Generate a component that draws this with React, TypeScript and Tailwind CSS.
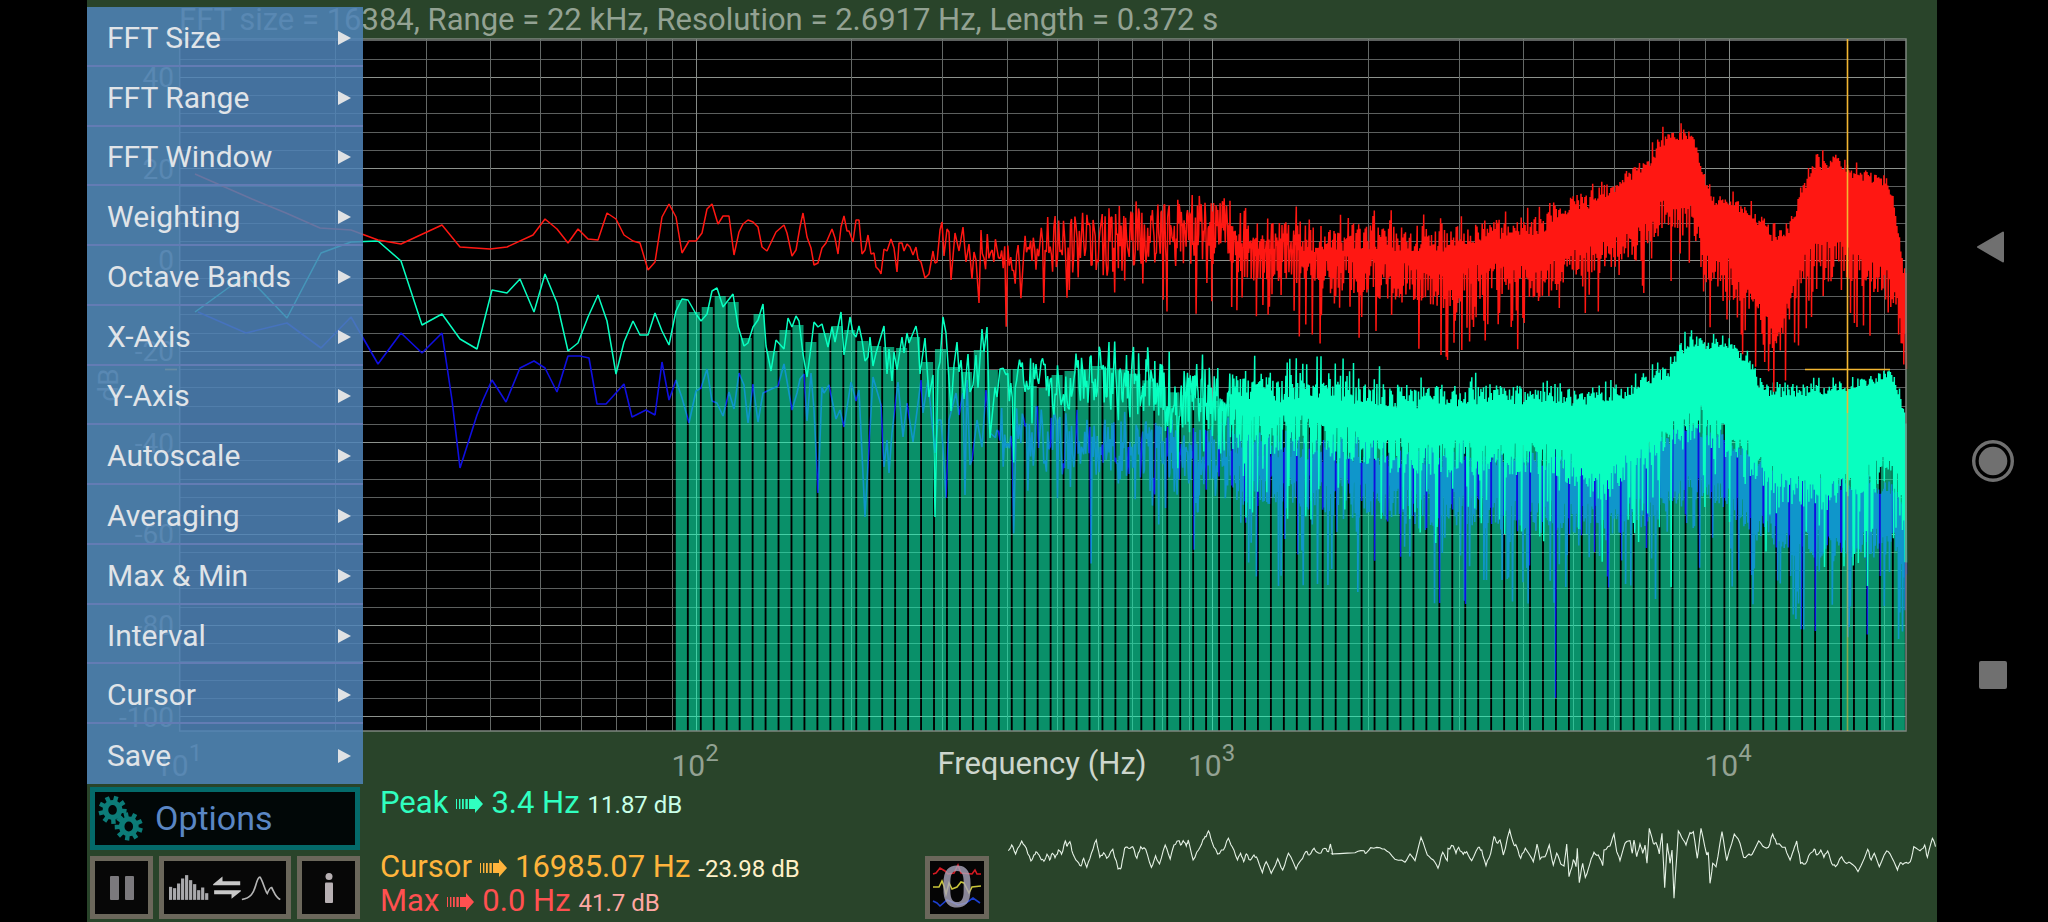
import React from "react";

/* ---------- chart geometry ---------- */

const LEFT = 179.7;
const RIGHT = 1906;
const TOP = 39;
const BOTTOM = 731;
const DECADE = 516.5;
const BIN_HZ = 2.6917;
const BAR_PITCH = 12.957;

const xOf = (hz: number) => LEFT + DECADE * (Math.log10(hz) - 1);
const yOf = (db: number) => 260 - db * 4.568;

type Key = [x: number, top: number, bottom: number];

function makeRandom(seed: number) {
  let s = seed;
  return () => {
    s = (s + 0x6d2b79f5) | 0;
    let t = Math.imul(s ^ (s >>> 15), 1 | s);
    t = (t + Math.imul(t ^ (t >>> 7), 61 | t)) ^ t;
    return ((t ^ (t >>> 14)) >>> 0) / 4294967296;
  };
}

function envelope(keys: Key[], x: number): [number, number] {
  let i = 0;
  while (i < keys.length - 2 && keys[i + 1][0] < x) i++;
  const a = keys[i];
  const b = keys[i + 1];
  const t = Math.min(1, Math.max(0, (x - a[0]) / (b[0] - a[0])));
  return [a[1] + (b[1] - a[1]) * t, a[2] + (b[2] - a[2]) * t];
}

/* Low bins are measured values; the dense part is noise inside an envelope. */
function spectrum(head: string, keys: Key[], seed: number, dip: number, extra: Key[] = []) {
  const rnd = makeRandom(seed);
  const out: string[] = [head];
  const start = keys[0][0];
  const dense = 1230;
  let bin = Math.ceil(Math.pow(10, (start - LEFT) / DECADE + 1) / BIN_HZ);
  for (; xOf(bin * BIN_HZ) < dense; bin++) {
    const x = xOf(bin * BIN_HZ);
    const [t, b] = envelope(keys, x);
    let y = t - 2 + (b - t) * rnd();
    const r = rnd();
    if (r < 0.08) y = b + rnd() * rnd() * dip;
    else if (r > 0.95) y = t - rnd() * 14;
    out.push(`${x.toFixed(1)},${y.toFixed(1)}`);
  }
  for (let x = dense; x <= RIGHT; x += 1.3) {
    const [t, b] = envelope(keys, x);
    const loose = Math.max(0, Math.min(1, (1640 - x) / 300));
    let hi = t - 4 + (13 + 17 * loose) * rnd();
    if (rnd() < 0.1) hi = t - 4 - (8 + 8 * loose) * rnd();
    let lo = b - 20 - 8 * loose + (32 + 8 * loose) * rnd();
    if (rnd() < 0.27) lo = b + Math.pow(rnd(), 1.5) * dip;
    for (const e of extra) if (Math.abs(e[0] - x) < 0.7) lo = e[2];
    out.push(`${x.toFixed(1)},${hi.toFixed(1)} ${(x + 0.4).toFixed(1)},${lo.toFixed(1)}`);
  }
  return out.join(" ");
}

const redHead =
  "195,174 252,199 286,213 320,228 351,230 378,240 401,244 442,225 460,247 490,249 507,247 533,235 545,219 557,229 568,243 578,229 588,239 598,240 607,213 616,219 624,235 633,241 640,243 648,270 655,262 662,217 669,204 676,217 682,253 689,241 696,241 702,233 707,209 712,204 718,224 723,216 729,216 734,255 739,232 743,224 748,220 753,222 758,227 762,247 767,251 776,232 784,225 787,233 792,256 796,250 800,227 803,213 807,237 811,248 814,265 818,263 822,248 826,243 832,229 835,238 838,254 841,227 844,216 847,231 849,231 853,242 856,220 859,220 862,254 865,250 868,235 871,254 874,253 876,267 879,270 881,274 884,249 887,251 891,239 894,248 897,272 899,243 902,243 904,251 907,244 910,247 913,255 916,247 918,259 921,262 925,278 929,274 933,251 935,263 937,262 940,230 942,222 944,256 947,229 949,232 951,280 955,233 959,251 963,227 966,262 969,244 972,279 974,252 976,260 979,303 981,230";

const redKeys: Key[] = [
  [982, 232, 278], [1030, 236, 280], [1060, 218, 272], [1100, 216, 280], [1130, 208, 275],
  [1160, 206, 258], [1200, 205, 265], [1225, 204, 262], [1235, 222, 268], [1290, 224, 270],
  [1330, 228, 282], [1370, 226, 286], [1410, 230, 290], [1440, 232, 300], [1470, 226, 288],
  [1500, 222, 286], [1540, 220, 288], [1560, 210, 280], [1573, 196, 268], [1590, 198, 266],
  [1600, 190, 262], [1613, 185, 258], [1630, 174, 252], [1640, 166, 246], [1650, 157, 234],
  [1660, 142, 220], [1668, 133, 214], [1690, 132, 222], [1697, 145, 236], [1700, 164, 258],
  [1708, 182, 270], [1715, 204, 278], [1722, 195, 268], [1735, 201, 288], [1750, 210, 300],
  [1763, 220, 316], [1772, 233, 340], [1780, 233, 336], [1787, 229, 320], [1795, 210, 290],
  [1800, 194, 278], [1807, 181, 268], [1812, 163, 262], [1830, 161, 256], [1838, 156, 258],
  [1850, 169, 270], [1860, 173, 276], [1880, 177, 284], [1888, 181, 290], [1895, 206, 308],
  [1900, 240, 332], [1903, 264, 345], [1906, 268, 355],
];

const cyanHead =
  "195,312 246,275 287,318 321,253 351,242 378,241 401,261 422,325 442,314 460,339 477,349 492,290 507,293 520,279 534,312 545,274 557,303 568,351 578,343 588,317 598,295 607,321 616,374 624,342 633,321 640,335 648,335 655,313 662,331 669,345 676,311 682,299 688,300 696,314 701,321 707,314 712,291 717,288 723,307 733,294 738,326 744,346 748,343 753,327 758,320 763,304 766,346 771,371 776,340 784,349 788,318 792,327 796,316 799,321 803,354 807,377 811,347 814,322 818,327 822,324 828,347 832,327 835,342 841,312 844,355 850,317 853,333 856,337 859,326 862,340 865,361 868,357 870,337 873,366 876,353 884,326 887,374 889,349 892,381 894,352 897,370 902,337 904,353 907,333 909,343 916,326 918,338 920,374 925,338 929,397 933,375 935,517 938,370 940,362 943,317 946,333 951,411 954,365 957,342 959,372 961,360 964,399 968,354 970,392 973,385 976,355 978,388 982,329 984,352 987,327 990,438 995,387 997,397 1000,369";

const cyanKeys: Key[] = [
  [1002, 362, 402], [1045, 354, 396], [1060, 378, 422], [1090, 352, 404], [1130, 352, 410],
  [1170, 366, 430], [1200, 368, 430], [1230, 370, 436], [1280, 378, 444], [1300, 376, 440],
  [1340, 376, 450], [1390, 386, 462], [1430, 388, 466], [1500, 388, 462], [1560, 390, 466],
  [1580, 397, 482], [1600, 393, 492], [1625, 389, 468], [1650, 376, 460], [1670, 368, 440],
  [1678, 349, 438], [1690, 340, 430], [1700, 337, 422], [1706, 349, 430], [1712, 337, 438],
  [1730, 340, 446], [1745, 355, 458], [1755, 367, 468], [1760, 386, 476], [1790, 389, 496],
  [1830, 386, 492], [1845, 385, 490], [1870, 378, 478], [1885, 370, 476], [1895, 377, 484],
  [1900, 392, 504], [1903, 410, 516], [1906, 418, 530],
];

const blueHead =
  "198,312 246,333 287,323 321,348 351,317 378,364 401,333 422,353 442,333 452,400 460,468 477,415 483,400 492,380 506,402 520,368 534,361 545,368 557,392 568,356 580,356 589,358 597,404 606,404 624,384 632,417 646,410 655,415 662,362 669,400 676,380 682,398 689,423 696,391 701,388 707,369 712,401 717,403 723,416 729,392 734,409 739,373 744,385 748,423 753,384 758,422 763,393 778,386 784,364 792,410 797,393 800,379 804,374 807,421 811,373 814,410 818,493 822,387 824,393 829,385 836,419 840,410 844,427 851,382 856,401 859,390 865,517 869,447 873,377 881,405 884,467 887,440 889,473 892,433 898,382 903,437 907,403 913,442 921,380 923,413 928,380 935,453 938,420 941,420 944,463 946,498 949,420 956,393 959,415 963,393 965,495 967,380 970,465 972,460 977,420 982,447 986,390 990,433";

const blueKeys: Key[] = [
  [994, 408, 458], [1050, 412, 468], [1100, 420, 480], [1200, 426, 488], [1300, 434, 500],
  [1400, 445, 512], [1500, 450, 518], [1600, 460, 526], [1650, 445, 516], [1690, 425, 490],
  [1730, 440, 502], [1760, 460, 532], [1800, 475, 546], [1850, 485, 548], [1895, 485, 546],
  [1903, 510, 570], [1906, 520, 585],
];

const redLine = spectrum(redHead, redKeys, 11, 66);
const cyanLine = spectrum(cyanHead, cyanKeys, 29, 80, [[1671, 0, 587], [1867, 0, 586]]);
const blueLine = spectrum(blueHead, blueKeys, 47, 90, [[1555, 0, 698], [1815, 0, 631]]);

const barTops = [
  300, 312, 307, 296, 302, 338, 314, 351, 330, 325, 342, 333, 326, 330, 341, 346, 347, 348, 337,
  362, 349, 367, 372, 350, 370, 369, 369, 386, 388, 375, 371,
];
const bars = Array.from({ length: 95 }, (_, i) => {
  const x = 675.8 + i * BAR_PITCH;
  const top = barTops[i] ?? envelope(cyanKeys, x + 6)[0] + Math.min(34, 10 + (i - 30) * 2);
  return { x, top, width: Math.min(11.1, RIGHT - x) };
});

const verticals: { x: number; major: boolean }[] = [];
for (let d = 1; d <= 4; d++)
  for (let m = 1; m <= 9; m++) {
    const hz = m * Math.pow(10, d);
    if (hz > 10 && hz < 22000) verticals.push({ x: xOf(hz), major: m === 1 });
  }
const horizontals: { y: number; major: boolean }[] = [];
for (let db = -100; db <= 48; db += 4) horizontals.push({ y: yOf(db), major: db % 20 === 0 });

/* ---------- waveform ---------- */

const waveNoise = makeRandom(5);

function trace(ox: number, oy: number, sx: number, sy: number, data: number[]) {
  const out: string[] = [];
  for (let i = 0; i < data.length; i += 2) {
    const x = ox + data[i] / sx;
    const y = oy + data[i + 1] / sy;
    out.push(`${x.toFixed(1)},${y.toFixed(1)}`);
    if (i + 2 < data.length) {
      const nx = ox + data[i + 2] / sx;
      const ny = oy + data[i + 3] / sy;
      const rough = nx - x > 12 ? 0.5 : 3;
      for (const t of [0.33, 0.66])
        out.push(`${(x + (nx - x) * t).toFixed(1)},${(y + (ny - y) * t + (waveNoise() - 0.5) * rough).toFixed(1)}`);
    }
  }
  return out.join(" ");
}

const wave = [
  trace(900, 720, 2.613, 3, [
    283, 392, 292, 375, 302, 402, 318, 363, 330, 385, 342, 423, 350, 405, 358, 397, 366, 412, 376,
    424, 384, 403, 391, 420, 398, 400, 405, 413, 414, 390, 422, 403, 432, 363, 437, 378, 444, 365,
    452, 402, 464, 425, 473, 438, 480, 415, 488, 442, 500, 400, 513, 360, 522, 412, 532, 398, 540,
    415, 556, 388, 570, 447, 578, 443, 587, 385, 597, 385, 608, 380, 619, 415, 629, 380, 642, 388,
    657, 442, 668, 407, 678, 432, 693, 375, 706, 417, 716, 375, 728, 362, 733, 375, 740, 362, 748,
    378, 753, 360, 766, 420, 780, 390, 792, 358, 800, 350, 806, 333, 815, 365, 830, 402, 845, 390,
    858, 355, 868, 380, 882, 420, 890, 400, 898, 425, 905, 402, 915, 420, 925, 405, 935, 420, 947,
    458, 957, 425, 970, 460, 987, 416, 1000, 450, 1015, 400, 1035, 448, 1048, 420, 1060, 395, 1070,
    405, 1082, 385, 1095, 400, 1110, 385, 1120, 395, 1125, 372, 1130, 403,
  ]),
  trace(1240, 820, 3, 3, [
    276, 102, 345, 98, 372, 92, 378, 100, 392, 83, 420, 83, 440, 93, 465, 118, 495, 127, 510, 102,
    525, 122, 543, 52, 562, 105, 580, 120, 594, 145, 608, 97, 622, 122, 624, 85, 640, 78, 648, 100,
    656, 82, 670, 103, 680, 95, 695, 122, 715, 82, 725, 90, 738, 137, 752, 100, 762, 50, 770, 68,
    780, 60, 790, 105, 809, 30, 822, 75, 830, 80, 842, 115, 856, 85, 865, 98, 880, 125, 891, 72,
    900, 118, 915, 110, 928, 75, 940, 135, 950, 100, 962, 132, 972, 138, 980, 72, 987, 170, 1000,
    120, 1008, 140, 1012, 85, 1018, 188, 1028, 130, 1036, 172, 1050, 130, 1062, 97, 1075, 105,
    1088, 137, 1092, 90, 1110, 78, 1122, 42, 1130, 95, 1140, 122, 1155, 70, 1170, 62, 1177, 100,
    1182, 60, 1190, 110, 1200, 72, 1208, 100, 1215, 75, 1221, 130, 1228, 25, 1240, 70, 1248, 68,
    1258, 102, 1266, 40, 1274, 203, 1282, 70, 1290, 130, 1296, 90, 1302, 235, 1315, 33, 1330, 60,
    1338, 75, 1350, 38, 1360, 35, 1372, 115, 1383, 25, 1400, 105, 1405, 100, 1410, 190, 1418, 130,
    1428, 140, 1446, 35, 1460, 122, 1483, 42, 1500, 70,
  ]),
  trace(1440, 720, 2.579, 3, [
    783, 412, 797, 402, 805, 403, 822, 363, 832, 378, 847, 382, 858, 342, 868, 372, 890, 382, 903,
    420, 912, 390, 920, 363, 930, 430, 942, 432, 955, 400, 965, 387, 972, 405, 982, 390, 990, 412,
    1000, 393, 1010, 430, 1020, 440, 1036, 410, 1048, 430, 1058, 428, 1078, 455, 1103, 388, 1112,
    420, 1120, 400, 1133, 440, 1152, 393, 1165, 412, 1180, 450, 1187, 428, 1197, 430, 1213, 425,
    1222, 380, 1238, 392, 1250, 375, 1257, 412, 1270, 355, 1278, 380,
  ]),
].join(" ");

/* ---------- pieces ---------- */

const label = "font-['Roboto',sans-serif] fill-[#93a293] text-[28px]";

function Chart() {
  return (
    <svg viewBox="87 0 1850 784" className="block h-auto w-full" role="img" aria-label="Spectrum">
      <rect x={LEFT} y={TOP} width={RIGHT - LEFT} height={BOTTOM - TOP} fill="#000" />
      <g shapeRendering="crispEdges">
        {horizontals.map((l) => (
          <line key={l.y} x1={LEFT} x2={RIGHT} y1={l.y} y2={l.y} stroke={l.major ? "#8d928d" : "#5c5f5e"} />
        ))}
        {verticals.map((l) => (
          <line key={l.x} x1={l.x} x2={l.x} y1={TOP} y2={BOTTOM} stroke={l.major ? "#858a86" : "#646866"} />
        ))}
      </g>
      <polyline points={blueLine} fill="none" stroke="#0f0fe0" strokeWidth="1.6" strokeLinejoin="bevel" />
      <g fill="#10ffba" fillOpacity="0.565">
        {bars.map((b) => (
          <rect key={b.x} x={b.x} y={b.top} width={b.width} height={BOTTOM - b.top} />
        ))}
      </g>
      <polyline points={cyanLine} fill="none" stroke="#08ffc0" strokeWidth="1.5" strokeLinejoin="bevel" />
      <polyline points={redLine} fill="none" stroke="#ff1712" strokeWidth="1.5" strokeLinejoin="bevel" />
      <rect x={LEFT} y={TOP} width={RIGHT - LEFT} height={BOTTOM - TOP} fill="none" stroke="#7d867f" strokeWidth="1.5" />
      <g stroke="#f2b632" strokeWidth="1.6">
        <line x1="1847.5" x2="1847.5" y1={TOP} y2="413" />
        <line x1="1847.5" x2="1847.5" y1="413" y2={BOTTOM} strokeOpacity="0.55" />
        <line x1="1805" x2="1890" y1="369.5" y2="369.5" />
        <line x1="165" x2="177" y1="369.5" y2="369.5" />
      </g>

      <text x="179" y="30" className="fill-[#93a293] font-['Roboto',sans-serif] text-[31px]">
        FFT size = 16384, Range = 22 kHz, Resolution = 2.6917 Hz, Length = 0.372 s
      </text>
      {[40, 20, 0, -20, -40, -60, -80, -100].map((db) => (
        <text key={db} x="174" y={yOf(db) + 10} textAnchor="end" className={label}>
          {db}
        </text>
      ))}
      <text transform="translate(118 385) rotate(-90)" textAnchor="middle" className={label}>
        dB
      </text>
      {[1, 2, 3, 4].map((p) => {
        const x = xOf(Math.pow(10, p)) + 9;
        return (
          <g key={p}>
            <text x={x} y="776" textAnchor="end" className="fill-[#93a293] font-['Roboto',sans-serif] text-[30px]">
              10
            </text>
            <text x={x} y="761" className="fill-[#93a293] font-['Roboto',sans-serif] text-[24px]">
              {p}
            </text>
          </g>
        );
      })}
      <text x="1042" y="774" textAnchor="middle" className="fill-[#cdd6cd] font-['Roboto',sans-serif] text-[31px]">
        Frequency (Hz)
      </text>
    </svg>
  );
}

const menuItems = [
  "FFT Size", "FFT Range", "FFT Window", "Weighting", "Octave Bands", "X-Axis", "Y-Axis",
  "Autoscale", "Averaging", "Max & Min", "Interval", "Cursor", "Save",
];

function Menu() {
  return (
    <div className="absolute bottom-0 left-0 grid h-[777px] w-[276px] auto-rows-fr divide-y-2 divide-[#637cb4] bg-[#4f84b8]/86">
      {menuItems.map((item) => (
        <button key={item} type="button" className="flex items-center justify-between pt-1 pr-3 pl-5 text-left text-[30px] leading-8 text-[#e0e4e8]">
          <span>{item}</span>
          <svg viewBox="0 0 13 14" className="h-3.5 w-[13px] fill-[#e0e2e4]" aria-hidden="true">
            <path d="M0 0 13 7 0 14Z" />
          </svg>
        </button>
      ))}
    </div>
  );
}

function gear(cx: number, cy: number, phase: number) {
  const teeth = 9;
  const pts: string[] = [];
  for (let i = 0; i < teeth; i++) {
    const a = phase + (i * 2 * Math.PI) / teeth;
    for (const [off, r] of [[-0.22, 30], [-0.16, 43], [0.16, 43], [0.22, 30]])
      pts.push(`${(cx + r * Math.cos(a + off)).toFixed(1)} ${(cy + r * Math.sin(a + off)).toFixed(1)}`);
  }
  return `M${pts.join("L")}Z M${cx - 13} ${cy}a13 15 0 1 0 26 0a13 15 0 1 0 -26 0Z`;
}

function Arrow() {
  return (
    <svg viewBox="0 0 27 18" className="h-[18px] w-[27px] fill-current" aria-hidden="true">
      <path d="M0 4h1v10H0zM3 4h1.4v10H3zM6 4h1.8v10H6zM9.4 4h2.4v10H9.4zM13 4h6V0l8 9-8 9v-4h-6z" />
    </svg>
  );
}

function Readout(props: { name: string; value: string; level: string; color: string; levelColor: string }) {
  return (
    <p className={`flex items-baseline gap-2 text-[31px] leading-8 whitespace-nowrap ${props.color}`}>
      <span>{props.name}</span>
      <Arrow />
      <span>{props.value}</span>
      <span className={`text-[24px] ${props.levelColor}`}>{props.level}</span>
    </p>
  );
}

const tool = "flex items-center justify-center border-[5px] border-[#6b675b] bg-[#070707]";

function Controls() {
  return (
    <div className="grid w-[270px] shrink-0 grid-cols-[63px_1fr_63px] grid-rows-[63px_63px] gap-1.5">
      <button type="button" className="col-span-3 flex items-center border-[5px] border-[#046a6a] bg-[#010707] pl-[3px] text-[34px] text-[#5a86c4]">
        <svg viewBox="40 35 136 140" className="mr-3 h-[47px] w-[45px] fill-[#0c7c78]" fillRule="evenodd" aria-hidden="true">
          <path d={gear(84, 79, 0.1)} />
          <path d={gear(133, 129, 0.3)} />
        </svg>
        <span>Options</span>
      </button>
      <button type="button" aria-label="Pause" className={tool}>
        <svg viewBox="0 0 24 24" className="h-6 w-6 fill-[#7b797d]" aria-hidden="true">
          <rect x="0" width="9" height="24" rx="1" />
          <rect x="15" width="9" height="24" rx="1" />
        </svg>
      </button>
      <button type="button" aria-label="Switch between spectrum and bars" className={tool}>
        <svg viewBox="255 270 335 80" className="h-[27px] w-[112px]" aria-hidden="true">
          <g fill="#a9a9ac">
            {[308, 312, 298, 283, 273, 288, 300, 318, 310, 327].map((y, i) => (
              <rect key={i} x={255 + i * 12} y={y} width="9.5" height={347 - y} />
            ))}
          </g>
          <path d="M387 300 415 277v14h53v12h-81zM470 321l-28 23v-14h-52v-12h80z" fill="#c8c8c8" />
          <path d="M473 346C500 341 508 326 514 305Q521 279 527 279C534 285 543 322 549 328C553 318 558 309 562 310C570 325 574 341 588 346" fill="none" stroke="#b4b4b4" strokeWidth="5" />
        </svg>
      </button>
      <button type="button" aria-label="Information" className={tool}>
        <svg viewBox="0 0 10 30" className="h-[30px] w-2.5 fill-[#b7b0b3]" aria-hidden="true">
          <circle cx="5" cy="3.5" r="3.5" />
          <rect x="1" y="9.5" width="8" height="20.5" rx="1" />
        </svg>
      </button>
    </div>
  );
}

function NavBar() {
  const btn = "flex h-11 w-11 items-center justify-center";
  return (
    <nav className="flex w-[111px] shrink-0 flex-col items-center justify-center gap-[170px]">
      <button type="button" aria-label="Back" className={btn}>
        <svg viewBox="0 0 44 44" className="h-11 w-11" aria-hidden="true">
          <path d="M7 22 32 7.500V36.500Z" fill="#707070" stroke="#707070" strokeWidth="2" strokeLinejoin="round" />
        </svg>
      </button>
      <button type="button" aria-label="Home" className={btn}>
        <svg viewBox="0 0 44 44" className="h-11 w-11" aria-hidden="true">
          <circle cx="22" cy="22" r="19.3" fill="none" stroke="#707070" strokeWidth="3.4" />
          <circle cx="22" cy="22" r="14.3" fill="#707070" />
        </svg>
      </button>
      <button type="button" aria-label="Recent apps" className={btn}>
        <span className="h-7 w-7 rounded-xs bg-[#707070]" />
      </button>
    </nav>
  );
}

export default function App() {
  return (
    <div className="flex min-h-screen bg-black pl-[87px] font-['Roboto',sans-serif]">
      <main className="flex min-w-0 flex-1 flex-col bg-[#29442a]">
        <div className="relative">
          <Chart />
          <Menu />
        </div>
        <div className="flex flex-1 py-[3px] pl-[3px]">
          <Controls />
          <div className="ml-5 flex w-[545px] shrink-0 flex-col">
            <Readout name="Peak" value="3.4 Hz" level="11.87 dB" color="text-[#30ffc0]" levelColor="text-[#c8ffe8]" />
            <div className="mt-auto">
              <Readout name="Cursor" value="16985.07 Hz" level="-23.98 dB" color="text-[#ffb43c]" levelColor="text-[#fff0c8]" />
              <Readout name="Max" value="0.0 Hz" level="41.7 dB" color="text-[#ff5050]" levelColor="text-[#ffa8a4]" />
            </div>
          </div>
          <button type="button" aria-label="Overlays" className="h-[63px] w-16 shrink-0 self-end border-[5px] border-[#6b675b] bg-[#050505]">
            <svg viewBox="0 0 54 53" className="h-full w-full overflow-visible" aria-hidden="true">
              <g fill="none" strokeWidth="1.6">
                <path d="M3 13 6 12 10 7 15 10 18 13 24 12 28 4 31 12 42 13 45 9 47 13 51 13" stroke="#d41a22" />
                <path d="M3 26H9L12 20 14 25 16 33 19 22 22 28 27 26 31 21 34 22 39 32 42 26 51 25" stroke="#c9c53a" />
                <path d="M3 40 7 42 10 45 17 39 22 41 28 44 36 42 43 37 50 42" stroke="#1c3fd0" />
              </g>
              <text x="27" y="46" textAnchor="middle" className="fill-[#aaa6bc]/80 font-['Roboto',sans-serif] text-[58px] font-medium">
                0
              </text>
            </svg>
          </button>
          <div className="ml-[19px] flex min-w-0 flex-1 items-end">
            <svg viewBox="1008 820 929 99" className="block h-auto w-full" role="img" aria-label="Waveform">
              <polyline points={wave} fill="none" stroke="#e6f2e6" strokeWidth="1.1" />
            </svg>
          </div>
        </div>
      </main>
      <NavBar />
    </div>
  );
}
